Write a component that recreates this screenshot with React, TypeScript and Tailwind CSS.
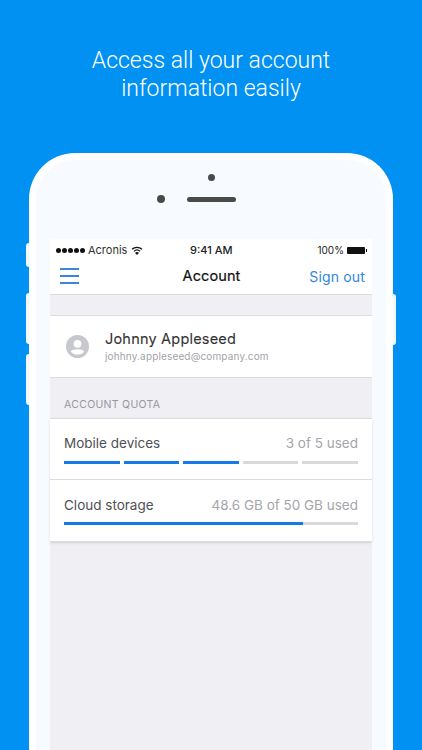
const blue = 'bg-[#1579e8]';

function Bars() {
  return (
    <div className="flex gap-1 mt-2">
      {[1, 1, 1, 0, 0].map((on, i) => (
        <div key={i} className={`h-[3px] flex-1 ${on ? blue : 'bg-[#d9d9d9]'}`} />
      ))}
    </div>
  );
}

function Wifi() {
  return (
    <svg width="12" height="9" viewBox="0 0 12 9" className="ml-1">
      <path d="M6 9 L4 6.8 A3 3 0 0 1 8 6.8 Z" fill="#111" />
      <path d="M2.9 5.4 A4.6 4.6 0 0 1 9.1 5.4" fill="none" stroke="#111" strokeWidth="1.2" />
      <path d="M1 3.3 A7.2 7.2 0 0 1 11 3.3" fill="none" stroke="#111" strokeWidth="1.2" />
    </svg>
  );
}

function Avatar() {
  return (
    <svg width="23" height="23" viewBox="0 0 23 23">
      <circle cx="11.5" cy="11.5" r="11.5" fill="#c7c7cf" />
      <circle cx="11.5" cy="8.8" r="3.9" fill="#fff" />
      <path d="M4.8 16.4 C6.4 13.6 16.6 13.6 18.2 16.4 A8.6 8.6 0 0 1 4.8 16.4 Z" fill="#fff" />
    </svg>
  );
}

function StatusBar() {
  return (
    <div className="h-[22px] flex items-center justify-between pl-[6px] pr-[5px] text-[11px] text-[#222] relative">
      <div className="flex items-center">
        <div className="flex gap-px">
          {[0, 1, 2, 3, 4].map(i => (
            <span key={i} className="w-[5px] h-[5px] rounded-full bg-[#111]" />
          ))}
        </div>
        <span className="ml-[3px] text-[#333]">Acronis</span>
        <Wifi />
      </div>
      <span className="absolute left-[140px] font-medium">9:41 AM</span>
      <div className="flex items-center">
        <span className="text-[10px]">100%</span>
        <div className="ml-[3px] w-[18px] h-[7px] bg-[#111] rounded-[1px]" />
        <div className="w-px h-[3px] bg-[#111] ml-px" />
      </div>
    </div>
  );
}

function NavBar() {
  return (
    <div className="h-[33px] grid grid-cols-3 items-center pl-[10px] pr-[7px] pb-[3px]">
      <div className="flex flex-col gap-[5px] w-[19px]">
        <div className="h-[2px] bg-[#3b86dc]" />
        <div className="h-[2px] bg-[#3b86dc]" />
        <div className="h-[2px] bg-[#3b86dc]" />
      </div>
      <span className="text-[14.5px] text-center text-[#111] tracking-[0.1px] ml-[-2px] [-webkit-text-stroke:0.2px_#111]">Account</span>
      <span className="text-[14px] text-right text-[#2f88e0] tracking-[0.15px]">Sign out</span>
    </div>
  );
}

export default function App() {
  return (
    <div className="h-[750px] w-[422px] overflow-hidden bg-[#0091f3] font-['Inter',sans-serif]">
      <div className="h-[153px] pt-[47px] text-center text-white font-light text-[23px] leading-[28px] font-['Roboto',sans-serif]">
        <p>Access all your account</p>
        <p>information easily</p>
      </div>

      <div className="relative ml-[29px] w-[364px]">
        {/* side buttons */}
        <div className="absolute -left-[3px] top-[90px] w-[3px] h-[24px] bg-[#f2f8fe] rounded-l-sm" />
        <div className="absolute -left-[3px] top-[140px] w-[3px] h-[51px] bg-[#f2f8fe] rounded-l-sm" />
        <div className="absolute -left-[3px] top-[201px] w-[3px] h-[51px] bg-[#f2f8fe] rounded-l-sm" />
        <div className="absolute -right-[3px] top-[141px] w-[3px] h-[51px] bg-[#f2f8fe] rounded-r-sm" />

        <div className="h-[610px] rounded-t-[46px] border-x-[7px] border-t-[7px] border-white bg-[#f7fafe] px-[14px]">
          <div className="h-[79px] pt-[14px]">
            <div className="w-[7px] h-[7px] rounded-full bg-[#4a4a4a] mx-auto" />
            <div className="flex items-center mt-[14px] ml-[107px]">
              <div className="w-2 h-2 rounded-full bg-[#4a4a4a]" />
              <div className="w-[49px] h-[5px] rounded-full bg-[#4a4a4a] ml-[22px]" />
            </div>
          </div>

          {/* phone screen */}
          <div className="w-[322px] h-[511px] bg-[#efeff4]">
            <div className="bg-white border-b border-[#dcdce0] h-[56px]">
              <StatusBar />
              <NavBar />
            </div>

            <div className="mt-[20px] h-[63px] bg-white border-y border-[#dcdce0] flex items-center pl-[16px]">
              <Avatar />
              <div className="ml-[16px] mt-[-2px]">
                <p className="text-[14.5px] leading-[20px] text-[#333] tracking-[0.2px] [-webkit-text-stroke:0.1px_#333]">Johnny Appleseed</p>
                <p className="text-[10px] leading-[14px] text-[#a3a3a8] tracking-[0.15px]">johhny.appleseed@company.com</p>
              </div>
            </div>

            <p className="h-[40px] pt-[20px] pl-[14px] text-[10.5px] leading-[14px] text-[#97979c] tracking-[0.3px]">ACCOUNT QUOTA</p>

            <div className="bg-white border-y border-[#dcdce0] shadow-sm">
              <div className="h-[61px] px-[14px] pt-[14px] border-b border-[#dcdce0]">
                <div className="flex justify-between text-[13.5px] leading-[20px]">
                  <span className="text-[#505055]">Mobile devices</span>
                  <span className="text-[#a5a5aa]">3 of 5 used</span>
                </div>
                <Bars />
              </div>
              <div className="h-[61px] px-[14px] pt-[15px]">
                <div className="flex justify-between text-[13.5px] leading-[20px]">
                  <span className="text-[#505055]">Cloud storage</span>
                  <span className="text-[#a5a5aa]">48.6 GB of 50 GB used</span>
                </div>
                <div className="mt-[7px] h-[3px] bg-[#d9d9d9]">
                  <div className={`h-full ${blue}`} style={{ width: '81.4%' }} />
                </div>
              </div>
            </div>
          </div>
        </div>
      </div>
    </div>
  );
}
